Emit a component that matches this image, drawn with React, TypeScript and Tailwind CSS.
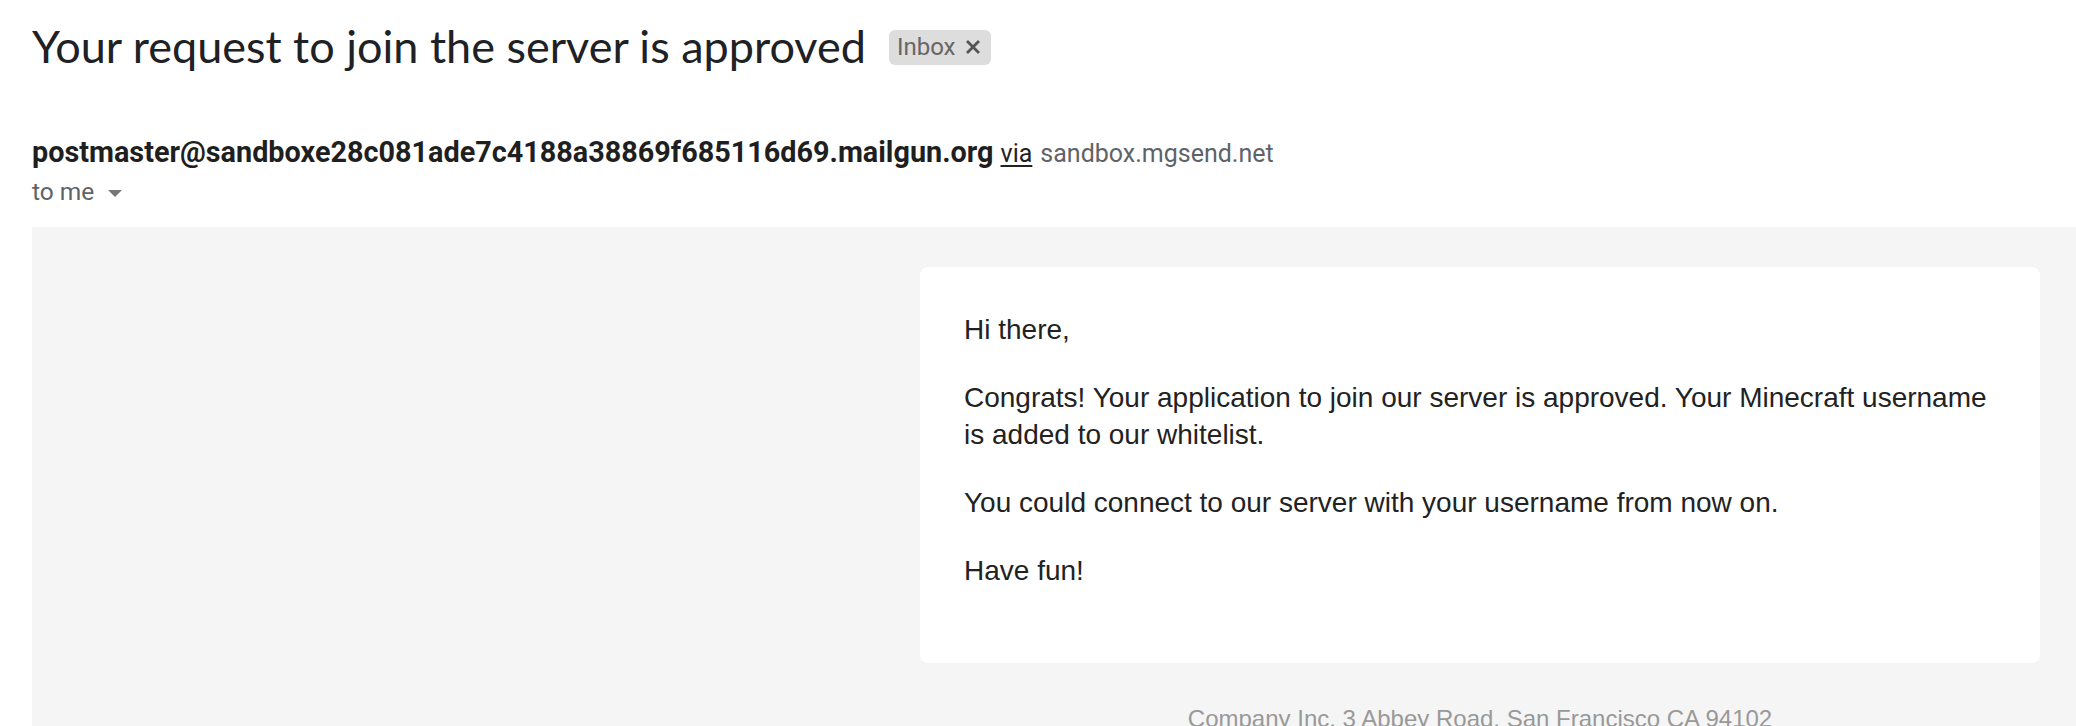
export default function App() {
  return (
    <div className="h-[726px] overflow-hidden bg-white pl-[32px]" style={{ fontFamily: "Roboto, sans-serif" }}>
      {/* subject */}
      <div className="flex items-center pt-[19px]">
        <h1 className="font-['Lato',sans-serif] text-[45px] leading-[54px] font-normal text-[#202124]">
          Your request to join the server is approved
        </h1>
        <span className="ml-[23px] mt-[2px] flex h-[35px] items-center rounded-[6px] bg-[#dddddd] pl-[8px] pr-[11px] text-[24px] text-[#666666]">
          Inbox
          <svg className="ml-[11px]" width="14" height="14" viewBox="0 0 14 14">
            <path d="M2 2L12 12M12 2L2 12" stroke="#555555" strokeWidth="2.8" strokeLinecap="square" />
          </svg>
        </span>
      </div>

      {/* sender */}
      <div className="mt-[61px] flex items-baseline whitespace-nowrap leading-[36px]">
        <span className="text-[28.8px] font-bold text-[#1f1f1f]">
          postmaster@sandboxe28c081ade7c4188a38869f685116d69.mailgun.org
        </span>
        <span className="ml-[7px] text-[25px] text-[#222222] underline underline-offset-[3px]">via</span>
        <span className="ml-[8px] text-[25px] text-[#5f6368]">sandbox.mgsend.net</span>
      </div>
      <div className="mt-[5px] flex items-center text-[24.5px] leading-[30px] text-[#5f6368]">
        to me
        <svg className="ml-[14px] mt-[2px]" width="14" height="7" viewBox="0 0 14 7">
          <path d="M0 0H14L7 7Z" fill="#777777" />
        </svg>
      </div>

      {/* message body */}
      <div className="mt-[20px] flex justify-end bg-[#f5f5f5] pr-[36px] pt-[40px] pb-[40px]">
        <div className="w-[1120px]">
          <div className="flex flex-col gap-[31px] rounded-[8px] bg-white px-[44px] pt-[44px] pb-[74px] font-['Liberation_Sans',Arial,sans-serif] text-[28px] leading-[37px] text-[#222222]">
            <p>Hi there,</p>
            <p>
              Congrats! Your application to join our server is approved. Your Minecraft username is added to our
              whitelist.
            </p>
            <p>You could connect to our server with your username from now on.</p>
            <p>Have fun!</p>
          </div>
          <p className="mt-[41px] text-center font-['Liberation_Sans',Arial,sans-serif] text-[24px] leading-[30px] text-[#999999]">
            Company Inc, 3 Abbey Road, San Francisco CA 94102
          </p>
        </div>
      </div>
    </div>
  );
}
